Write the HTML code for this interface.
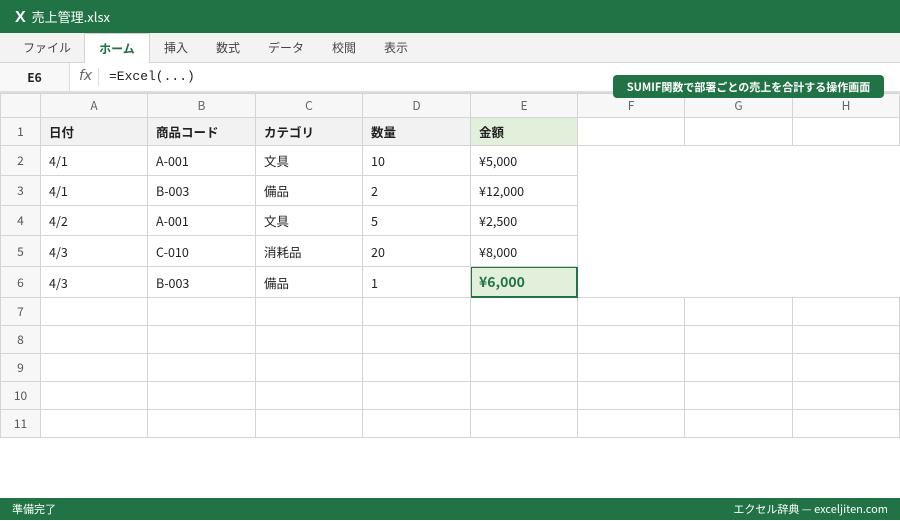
<!DOCTYPE html>
<html><head><meta charset="utf-8"><style>
*{margin:0;padding:0;box-sizing:border-box}
body{width:900px;height:520px;overflow:hidden;background:#fff;font-family:"Noto Sans CJK JP","Liberation Sans",sans-serif;position:relative;color:#222}
.title{position:absolute;left:0;top:0;width:900px;height:33px;background:#217346;color:#fff;font-size:13px;line-height:33px;padding-left:15px}
.title b{font-size:16px;margin-right:6px;font-family:"Liberation Sans",sans-serif}
.tabs{position:absolute;left:0;top:33px;width:900px;height:30px;background:#f3f3f3;border-bottom:1px solid #d4d4d4;font-size:12px;color:#444}
.tab{position:absolute;top:0;height:30px;line-height:30px}
.tab.act{background:#fff;border:1px solid #d4d4d4;border-bottom:none;color:#217346;font-weight:bold;height:30px;text-align:center}
.fbar{position:absolute;left:0;top:63px;width:900px;height:30px;background:#fff;border-bottom:2px solid #ddd}
.nm{position:absolute;left:0;top:0;width:70px;height:28px;line-height:30px;text-align:center;font-size:12px;font-weight:bold;background:#f8f8f8;border-right:1px solid #ddd}
.fx{position:absolute;left:79px;top:5px;font-style:italic;color:#666;font-size:14px;font-family:"DejaVu Sans",sans-serif}
.sep{position:absolute;left:98px;top:5px;width:1px;height:18px;background:#ddd}
.fm{position:absolute;left:109px;top:0;line-height:28px;font-family:"Liberation Mono",monospace;font-size:13px}
.badge{position:absolute;left:613px;top:75px;width:271px;height:23px;background:#217346;color:#fff;font-size:11px;font-weight:bold;line-height:24px;text-align:center;border-radius:4px;z-index:5}
table{position:absolute;left:0;top:93px;border-collapse:collapse;table-layout:fixed;font-size:12.5px}
td{border:1px solid #d4d4d4;padding:0 0 0 8px;white-space:nowrap}
tr.h td{background:#f7f7f7;color:#666;text-align:center;padding:0;font-size:12px}
td.rh{background:#f7f7f7;color:#555;text-align:center;padding:0;font-size:12px}
tr.r1 td{background:#f2f2f2;font-weight:bold}
tr.r1 td.rh{font-weight:normal;background:#f7f7f7}
tr.r1 td.e{background:#e2efdb}
tr.r1 td.w{background:#fff}
td.n{border:none}
td.sel{border:1px solid #217346;box-shadow:inset 0 0 0 1px #217346;background:#e2efdb;color:#217346;font-weight:bold;font-size:14px}
.status{position:absolute;left:0;top:498px;width:900px;height:22px;background:#217346;color:#fff;font-size:11px;line-height:23px}
</style></head><body>
<div class="title"><b>X</b>売上管理.xlsx</div>
<div class="tabs">
<div class="tab" style="left:23px">ファイル</div>
<div class="tab act" style="left:84px;width:66px">ホーム</div>
<div class="tab" style="left:164px">挿入</div>
<div class="tab" style="left:216px">数式</div>
<div class="tab" style="left:268px">データ</div>
<div class="tab" style="left:332px">校閲</div>
<div class="tab" style="left:384px">表示</div>
</div>
<div class="fbar"><div class="nm">E6</div><div class="fx">fx</div><div class="sep"></div><div class="fm">=Excel(...)</div></div>
<div class="badge">SUMIF関数で部署ごとの売上を合計する操作画面</div>
<table>
<colgroup><col style="width:40px"><col style="width:107px"><col style="width:108px"><col style="width:107px"><col style="width:108px"><col style="width:107px"><col style="width:107px"><col style="width:108px"><col style="width:107px"></colgroup>
<tr class="h" style="height:24px"><td></td><td>A</td><td>B</td><td>C</td><td>D</td><td>E</td><td>F</td><td>G</td><td>H</td></tr>
<tr class="r1" style="height:28px"><td class="rh">1</td><td>日付</td><td>商品コード</td><td>カテゴリ</td><td>数量</td><td class="e">金額</td><td class="w"></td><td class="w"></td><td class="w"></td></tr>
<tr style="height:30px"><td class="rh">2</td><td>4/1</td><td>A-001</td><td>文具</td><td>10</td><td>¥5,000</td><td class="n"></td><td class="n"></td><td class="n"></td></tr>
<tr style="height:30px"><td class="rh">3</td><td>4/1</td><td>B-003</td><td>備品</td><td>2</td><td>¥12,000</td><td class="n"></td><td class="n"></td><td class="n"></td></tr>
<tr style="height:30px"><td class="rh">4</td><td>4/2</td><td>A-001</td><td>文具</td><td>5</td><td>¥2,500</td><td class="n"></td><td class="n"></td><td class="n"></td></tr>
<tr style="height:31px"><td class="rh">5</td><td>4/3</td><td>C-010</td><td>消耗品</td><td>20</td><td>¥8,000</td><td class="n"></td><td class="n"></td><td class="n"></td></tr>
<tr style="height:31px"><td class="rh">6</td><td>4/3</td><td>B-003</td><td>備品</td><td>1</td><td class="sel">¥6,000</td><td class="n"></td><td class="n"></td><td class="n"></td></tr>
<tr style="height:28px"><td class="rh">7</td><td></td><td></td><td></td><td></td><td></td><td></td><td></td><td></td></tr>
<tr style="height:28px"><td class="rh">8</td><td></td><td></td><td></td><td></td><td></td><td></td><td></td><td></td></tr>
<tr style="height:28px"><td class="rh">9</td><td></td><td></td><td></td><td></td><td></td><td></td><td></td><td></td></tr>
<tr style="height:28px"><td class="rh">10</td><td></td><td></td><td></td><td></td><td></td><td></td><td></td><td></td></tr>
<tr style="height:28px"><td class="rh">11</td><td></td><td></td><td></td><td></td><td></td><td></td><td></td><td></td></tr>
</table>
<div class="status"><span style="position:absolute;left:12px">準備完了</span><span style="position:absolute;right:12px">エクセル辞典 — exceljiten.com</span></div>
</body></html>
